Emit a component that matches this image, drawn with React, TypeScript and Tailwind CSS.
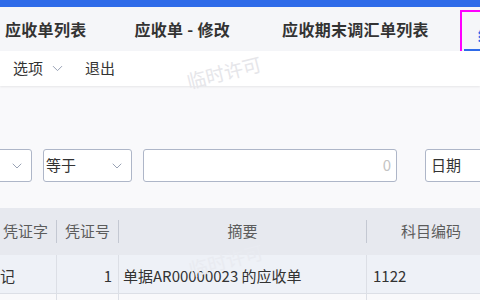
import { ChevronDown } from "lucide-react";

const font = { fontFamily: '"Noto Sans CJK SC", "Noto Sans", sans-serif' };

function Watermark({ className }: { className: string }) {
    return (
        <span
            className={`pointer-events-none absolute -rotate-[14deg] text-[19px] select-none ${className}`}
        >
            临时许可
        </span>
    );
}

export default function App() {
    return (
        <div className="relative h-[300px] w-[480px] overflow-hidden bg-[#f9f9fb]" style={font}>
            <div className="h-[7px] bg-[#2f6be9]" />

            <div className="flex h-[44px] items-center bg-[#f5f6f9] text-[16px] font-semibold tracking-[0.3px] text-[#333]">
                <span className="ml-[5px] shrink-0">应收单列表</span>
                <span className="ml-[48px] shrink-0">应收单 - 修改</span>
                <span className="ml-[52px] shrink-0">应收期末调汇单列表</span>
                <div className="relative ml-auto mt-[3px] h-[48px] w-[20px] shrink-0 self-start overflow-hidden border-2 border-r-0 border-[#ff00ff]">
                    <span className="absolute left-[16px] top-[10px] text-[16px] text-[#2f6be9]">结</span>
                    <div className="absolute bottom-[5px] left-[2px] right-0 h-[2px] bg-[#2f6be9]" />
                </div>
            </div>

            <div className="relative flex h-[35px] items-center bg-white text-[15px] text-[#333] shadow-[0_1px_2px_rgba(0,0,0,0.08)]">
                <span className="ml-[13px]">选项</span>
                <ChevronDown className="ml-[6px] h-[17px] w-[17px] text-[#97a0b3]" strokeWidth={1.4} />
                <span className="ml-[19px]">退出</span>
            </div>
            <Watermark className="left-[186px] top-[58px] text-[#e6e6ea]" />

            <div className="mt-[63px] flex h-[33px] items-stretch gap-[11px] text-[15px] text-[#333]">
                <div className="-ml-[60px] flex w-[92px] shrink-0 items-center justify-end rounded-[3px] border border-[#aeb6c8] bg-white pr-[6px]">
                    <ChevronDown className="h-4 w-4 text-[#9aa3b5]" strokeWidth={1.5} />
                </div>
                <div className="flex w-[89px] shrink-0 items-center justify-between rounded-[3px] border border-[#aeb6c8] bg-white pl-[2px] pr-[6px]">
                    <span>等于</span>
                    <ChevronDown className="h-4 w-4 text-[#9aa3b5]" strokeWidth={1.5} />
                </div>
                <div className="flex w-[254px] shrink-0 items-center justify-end rounded-[3px] border border-[#aeb6c8] bg-white pr-[5px] text-[#c4c4c4]">
                    0
                </div>
                <div className="ml-[17px] flex w-[80px] shrink-0 items-center rounded-[3px] border border-[#aeb6c8] bg-white pl-[5px]">
                    日期
                </div>
            </div>

            <div className="mt-[26px] text-[15px]">
                <div className="flex h-[47px] items-center bg-[#e7e9ef] text-[#5c5c5c]">
                    <div className="flex h-full w-[57px] shrink-0 items-center pl-[3px]">
                        <span className="flex-1">凭证字</span>
                        <span className="h-[23px] w-px bg-[#c4c8d2]" />
                    </div>
                    <div className="flex h-full w-[62px] shrink-0 items-center pl-[8px]">
                        <span className="flex-1">凭证号</span>
                        <span className="h-[23px] w-px bg-[#c4c8d2]" />
                    </div>
                    <div className="flex h-full w-[248px] shrink-0 items-center">
                        <span className="flex-1 text-center">摘要</span>
                        <span className="h-[23px] w-px bg-[#c4c8d2]" />
                    </div>
                    <div className="flex-1 pl-[34px]">科目编码</div>
                </div>
                <div className="flex h-[39px] items-center border-b border-[#dcdfe6] bg-[#eef1f7] text-[#333]">
                    <div className="flex h-full w-[57px] shrink-0 items-center border-r border-[#dcdfe6] pt-[5px]">记</div>
                    <div className="flex h-full w-[62px] shrink-0 items-center justify-end border-r border-[#dcdfe6] pr-[6px] pt-[5px]">1</div>
                    <div className="flex h-full w-[248px] shrink-0 items-center border-r border-[#dcdfe6] pl-[4px] pt-[5px]">单据AR00000023 的应收单</div>
                    <div className="flex-1 pl-[6px] pt-[5px]">1122</div>
                </div>
                <div className="flex h-[20px]">
                    <div className="h-full w-[57px] shrink-0 border-r border-[#dcdfe6]" />
                    <div className="h-full w-[62px] shrink-0 border-r border-[#dcdfe6]" />
                    <div className="h-full w-[248px] shrink-0 border-r border-[#dcdfe6]" />
                </div>
            </div>
            <Watermark className="left-[188px] top-[246px] text-[#e9ebf1]" />
        </div>
    );
}
